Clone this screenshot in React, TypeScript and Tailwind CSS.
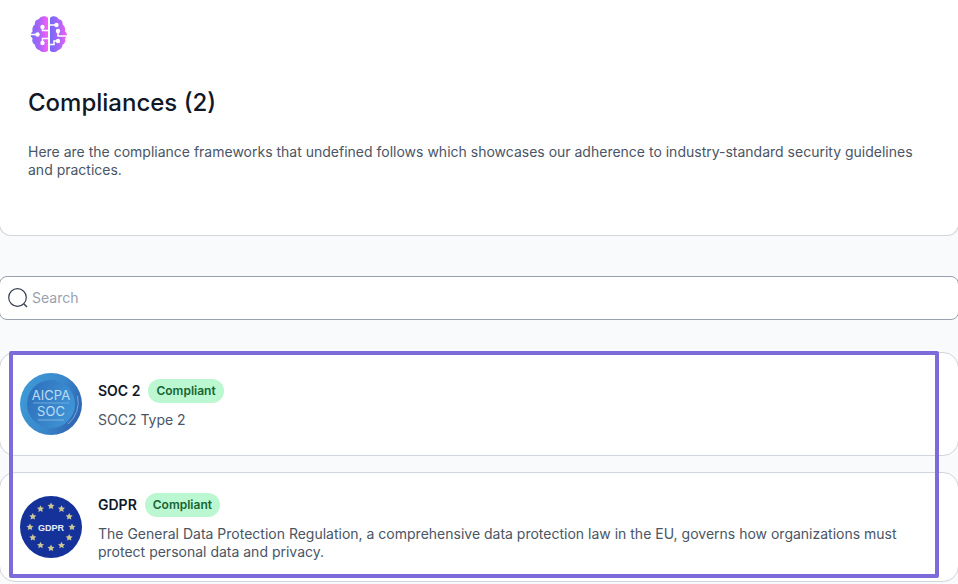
import React from 'react';

interface Compliance {
  id: string;
  name: string;
  status: string;
  description: string;
  logo: React.ReactNode;
}

const BrainLogo = () => (
  <svg viewBox="0 0 40 38" className="h-[38px] w-10" fill="none" aria-hidden="true">
    <defs>
      <linearGradient id="brainLeft" x1="0" y1="0" x2="1" y2="0">
        <stop offset="0" stopColor="#7c6cf8" />
        <stop offset="0.5" stopColor="#a864fb" />
        <stop offset="1" stopColor="#f95df7" />
      </linearGradient>
      <linearGradient id="brainRight" x1="0" y1="0" x2="1" y2="0">
        <stop offset="0" stopColor="#7569f8" />
        <stop offset="0.5" stopColor="#a566fa" />
        <stop offset="1" stopColor="#f85df4" />
      </linearGradient>
    </defs>
    <path
      d="M20 3C18.500.8 12.500.5 11 4C8 4.500 6.500 6.500 6.800 9.500C4.500 11.500 4 14 4.600 16.500C2 18.500 2 21.500 4.600 23.200C3.600 26 4.600 28.500 7 29.800C7 32.500 9 34.800 11.500 35.200C13.500 37.800 18.500 37.600 20 35.500Z"
      fill="url(#brainLeft)"
    />
    <path
      d="M22 3C23.500.8 29 .5 30.500 4C33.500 4.500 35 6.500 34.700 9.500C37 11.500 37.500 14 37 16.500C39.700 18.500 39.700 21.500 37 23.200C38 26 37 28.500 34.500 29.800C34.500 32.500 32.500 34.800 30 35.200C28 37.800 23.500 37.600 22 35.500Z"
      fill="url(#brainRight)"
    />
    <g stroke="#fff" strokeWidth="1.500">
      <path d="M14.500 12V15.500H20.500M2 19.500H10M14.500 27V23.500H20.500" />
      <path d="M21.500 10H28M30 15V21H39M21.500 29.500H26V26H30" />
    </g>
    <g fill="#fff">
      <circle cx="14.500" cy="12" r="2.200" />
      <circle cx="9.500" cy="19.500" r="2.200" />
      <circle cx="14.500" cy="28" r="2.200" />
      <circle cx="28.500" cy="10" r="2.200" />
      <circle cx="30" cy="16" r="2.200" />
      <circle cx="30" cy="26" r="2.200" />
    </g>
  </svg>
);

const SocLogo = () => (
  <svg viewBox="0 0 62 62" className="h-[62px] w-[62px] shrink-0" role="img" aria-label="AICPA SOC">
    <defs>
      <linearGradient id="socOuter" x1="0" y1="0.3" x2="1" y2="0.7">
        <stop offset="0" stopColor="#3d9bd6" />
        <stop offset="0.55" stopColor="#3a86ca" />
        <stop offset="1" stopColor="#2d62ae" />
      </linearGradient>
      <linearGradient id="socInner" x1="0" y1="0.3" x2="1" y2="0.7">
        <stop offset="0" stopColor="#2f70bc" />
        <stop offset="1" stopColor="#4096d7" />
      </linearGradient>
    </defs>
    <circle cx="31" cy="31" r="31" fill="url(#socOuter)" />
    <circle cx="31" cy="31" r="24" fill="url(#socInner)" />
    <path d="M57.500 23A28 28 0 0 1 48 51" stroke="#7fa9dc" strokeWidth="1" fill="none" />
    <path d="M13 30H49" stroke="#78b5e4" strokeWidth="0.800" />
    <path d="M18 47H44" stroke="#8cc0ea" strokeWidth="0.800" />
    <g fill="#bcdcf5" textAnchor="middle" className="font-['Inter',sans-serif]">
      <text x="31" y="27" fontSize="13">AICPA</text>
      <text x="31" y="43" fontSize="13">SOC</text>
    </g>
  </svg>
);

const STAR_ANGLES = [0, 30, 60, 90, 120, 150, 180, 210, 240, 270, 300, 330];

const GdprLogo = () => (
  <svg viewBox="0 0 62 62" className="h-[62px] w-[62px] shrink-0" role="img" aria-label="GDPR">
    <circle cx="31" cy="31" r="31" fill="#14329a" />
    {STAR_ANGLES.map((angle) => {
      const rad = (angle * Math.PI) / 180;
      return (
        <path
          key={angle}
          transform={`translate(${31 + 21 * Math.sin(rad)} ${31 - 21 * Math.cos(rad)})`}
          d="M0-3.500L1.100-1.200L3.500-1L1.700.7L2.200 3.100L0 1.900L-2.200 3.100L-1.700.7L-3.500-1L-1.100-1.200Z"
          fill="#ccc596"
        />
      );
    })}
    <text
      x="31"
      y="35"
      fontSize="9"
      fontWeight="700"
      fill="#e8edfa"
      textAnchor="middle"
      className="font-['Liberation_Sans',sans-serif]"
    >
      GDPR
    </text>
  </svg>
);

const compliances: Compliance[] = [
  {
    id: 'soc2',
    name: 'SOC 2',
    status: 'Compliant',
    description: 'SOC2 Type 2',
    logo: <SocLogo />
  },
  {
    id: 'gdpr',
    name: 'GDPR',
    status: 'Compliant',
    description:
      'The General Data Protection Regulation, a comprehensive data protection law in the EU, governs how organizations must protect personal data and privacy.',
    logo: <GdprLogo />
  }
];

const ComplianceCard: React.FC<{ item: Compliance }> = ({ item }) => (
  <li className="flex items-center gap-4 rounded-2xl border border-gray-300 bg-white p-5">
    {item.logo}
    <div className="flex min-w-0 flex-1 flex-col gap-2">
      <div className="flex items-center gap-2">
        <h2 className="text-sm font-semibold text-gray-900">{item.name}</h2>
        <span className="rounded-full bg-[#bbf7d0] px-2 text-xs leading-6 font-semibold text-[#166534]">
          {item.status}
        </span>
      </div>
      <p className="pr-8 text-sm leading-[18px] text-gray-600">{item.description}</p>
    </div>
  </li>
);

const App: React.FC = () => {
  return (
    <div className="min-h-screen overflow-hidden bg-[#f9fafb] font-['Inter',sans-serif]">
      <main className="-mx-px">
        {/* Header */}
        <header className="rounded-b-xl border border-t-0 border-gray-300 bg-white px-7 pt-[15px] pb-14">
          <BrainLogo />
          <h1 className="mt-8 text-2xl leading-9 font-medium text-gray-900">Compliances (2)</h1>
          <p className="mt-[22px] text-sm leading-[18px] text-gray-600">
            Here are the compliance frameworks that undefined follows which showcases our adherence to
            industry-standard security guidelines and practices.
          </p>
        </header>

        {/* Search */}
        <label className="mt-10 flex h-11 items-center gap-1 rounded-lg border border-gray-400 bg-white px-2">
          <svg viewBox="0 0 20 20" className="h-5 w-5" fill="none" stroke="#374151" aria-hidden="true">
            <circle cx="9.500" cy="9.500" r="8.800" strokeWidth="1.200" />
            <path d="M16 16L19 19" strokeWidth="1.400" />
          </svg>
          <input
            type="search"
            aria-label="Search"
            placeholder="Search"
            className="min-w-0 flex-1 bg-transparent text-sm text-gray-700 outline-none placeholder:text-gray-400"
          />
        </label>

        {/* Compliance list */}
        <section className="relative mt-8 pb-1">
          <ul className="flex flex-col gap-4">
            {compliances.map((item) => (
              <ComplianceCard key={item.id} item={item} />
            ))}
          </ul>
          <div className="pointer-events-none absolute -top-px right-5 bottom-2 left-2.5 rounded-xs border-4 border-[#7c6bd9]" />
        </section>
      </main>
    </div>
  );
};

export default App;
